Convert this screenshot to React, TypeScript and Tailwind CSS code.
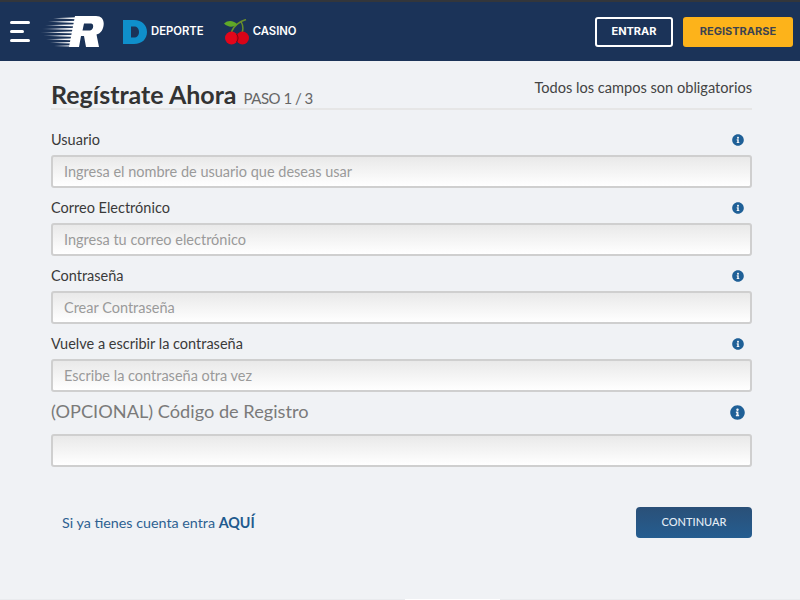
import { FaInfoCircle } from "react-icons/fa"

const fields = [
  { label: "Usuario", placeholder: "Ingresa el nombre de usuario que deseas usar" },
  { label: "Correo Electrónico", placeholder: "Ingresa tu correo electrónico" },
  { label: "Contraseña", placeholder: "Crear Contraseña" },
  { label: "Vuelve a escribir la contraseña", placeholder: "Escribe la contraseña otra vez" },
]

const streaks = [
  [13, 1.2, 2],
  [8, 4.7, 2.2],
  [5, 8.2, 2.2],
  [2, 11.7, 2.4],
  [0, 15.2, 2.4],
  [3, 18.7, 2.2],
  [6, 22.2, 2.2],
  [10, 25.7, 2],
  [14, 29, 1.8],
]

function Logo() {
  return (
    <svg width="64" height="32" viewBox="0 0 64 32" aria-hidden="true">
      <defs>
        <linearGradient id="streak" x1="0" x2="34" y1="0" y2="0" gradientUnits="userSpaceOnUse">
          <stop offset="0" stopColor="#fff" stopOpacity="0.2" />
          <stop offset="0.6" stopColor="#fff" stopOpacity="0.9" />
          <stop offset="1" stopColor="#fff" />
        </linearGradient>
      </defs>
      <path d="M35 0H56C62 0 64.500 4 63.500 10C62.700 14.500 60.500 17.500 56.500 18.500L59 31H46L44 20H41L39 31H29Z M44 7.500L42.500 14.500H50C53.500 14.500 54.500 7.500 51 7.500Z" fill="#fff" fillRule="evenodd" />
      {streaks.map(([x, y, h]) => (
        <path key={y} d={`M${x} ${y + h / 2}L37 ${y}V${y + h}Z`} fill="url(#streak)" />
      ))}
    </svg>
  )
}

function DeporteMark() {
  return (
    <svg width="24" height="24" viewBox="0 0 24 24" aria-hidden="true">
      <path d="M0 0H11C19 0 24 5 24 12C24 19 19 24 11 24H0Z M8 6.500V17.500H11C14 17.500 16 15.500 16 12C16 8.500 14 6.500 11 6.500Z" fill="#0f8fcb" fillRule="evenodd" />
    </svg>
  )
}

function Cherries() {
  return (
    <svg width="26" height="26" viewBox="0 0 26 26" aria-hidden="true">
      <path d="M7 15C8 10 11 6 17 2.500M17 2.500C19 6 19.500 10 18 14M17 2.500L22 0.500" stroke="#6a8f2a" strokeWidth="1.500" fill="none" />
      <path d="M0 4.500C4 0.500 10 1.500 13.500 5.500C9 8.500 4 8.500 0 4.500Z" fill="#5fa827" />
      <circle cx="7.500" cy="19" r="6.500" fill="#e3061a" />
      <circle cx="18.500" cy="19" r="6.500" fill="#d80417" />
      <path d="M12.500 15A6.500 6.500 0 0 1 12.500 23" stroke="#7c0410" strokeWidth="1" fill="none" />
    </svg>
  )
}

function Field({ label, placeholder }: { label: string; placeholder: string }) {
  return (
    <div className="h-[68px]">
      <div className="flex h-[31px] items-center justify-between pr-2">
        <label className="text-[14.5px] text-[#3a3a3a]">{label}</label>
        <FaInfoCircle className="text-[12px] text-[#1f6097]" />
      </div>
      <input
        placeholder={placeholder}
        className="block h-[33px] w-full rounded-[3px] border-2 border-[#cfcfcf] bg-gradient-to-b from-[#e9e9e9] to-white px-[11px] pb-px text-[14.5px] placeholder:text-[#9a9a9a]"
      />
    </div>
  )
}

export default function App() {
  return (
    <div className="flex h-[600px] w-[800px] flex-col overflow-hidden bg-[#f0f2f5] font-['Lato',sans-serif]">
      <header className="flex h-[61px] items-center border-t-2 border-[#33363b] bg-[#1b3358] pl-[10px] pr-[7px] font-['Inter',sans-serif]">
        <div className="flex w-5 flex-col gap-[6px]">
          <span className="block h-[3px] w-5 rounded-sm bg-white" />
          <span className="block h-[3px] w-[14px] rounded-sm bg-white" />
          <span className="block h-[3px] w-5 rounded-sm bg-white" />
        </div>
        <div className="ml-[10px]">
          <Logo />
        </div>
        <div className="ml-[19px] flex items-center gap-1">
          <DeporteMark />
          <span className="text-[11.3px] font-semibold text-white">DEPORTE</span>
        </div>
        <div className="ml-5 flex items-center gap-[3px]">
          <Cherries />
          <span className="text-[11.3px] font-semibold text-white">CASINO</span>
        </div>
        <div className="ml-auto flex items-center gap-[10px]">
          <button className="h-[30px] w-[78px] rounded-[3px] border-2 border-white text-[11px] font-bold text-white">ENTRAR</button>
          <button className="h-[30px] w-[110px] rounded-[3px] bg-[#fdb31a] text-[11px] font-bold text-[#3d4350]">REGISTRARSE</button>
        </div>
      </header>
      <main className="px-[48px] pl-[51px]">
        <div className="flex h-[49px] items-end justify-between border-b-2 border-[#e6e6e6]">
          <div className="-mb-px flex items-baseline gap-[7px]">
            <h1 className="pt-1 text-[25px] font-bold leading-[30px] text-[#333]">Regístrate Ahora</h1>
            <span className="text-[15px] tracking-[-0.5px] text-[#666]">PASO 1 / 3</span>
          </div>
          <span className="mb-[9px] text-[14.6px] text-[#444]">Todos los campos son obligatorios</span>
        </div>
        <div className="mt-[14px]">
          {fields.map((f) => (
            <Field key={f.label} label={f.label} placeholder={f.placeholder} />
          ))}
        </div>
        <div className="-mt-[6px] flex h-[44px] items-center justify-between pr-[7px]">
          <label className="text-[18.2px] text-[#7a7a7a]">(OPCIONAL) Código de Registro</label>
          <FaInfoCircle className="text-[15px] text-[#1f6097]" />
        </div>
        <input className="block h-[33px] w-full rounded-[3px] border-2 border-[#cfcfcf] bg-gradient-to-b from-[#e9e9e9] to-white px-3" />
        <div className="mt-[40px] flex items-center justify-between pl-[11px]">
          <p className="text-[14.3px] text-[#2d6191]">
            Si ya tienes cuenta entra <a className="font-bold text-[#1f5a8e]">AQUÍ</a>
          </p>
          <button className="h-[31px] w-[116px] rounded-[4px] bg-gradient-to-b from-[#2a5078] to-[#245d90] text-[11px] font-medium text-[#e4edf5]">CONTINUAR</button>
        </div>
      </main>
      <footer className="mt-auto flex h-px justify-center bg-[#e9ebee] pl-[105px]">
        <span className="block h-px w-[95px] bg-white" />
      </footer>
    </div>
  )
}
